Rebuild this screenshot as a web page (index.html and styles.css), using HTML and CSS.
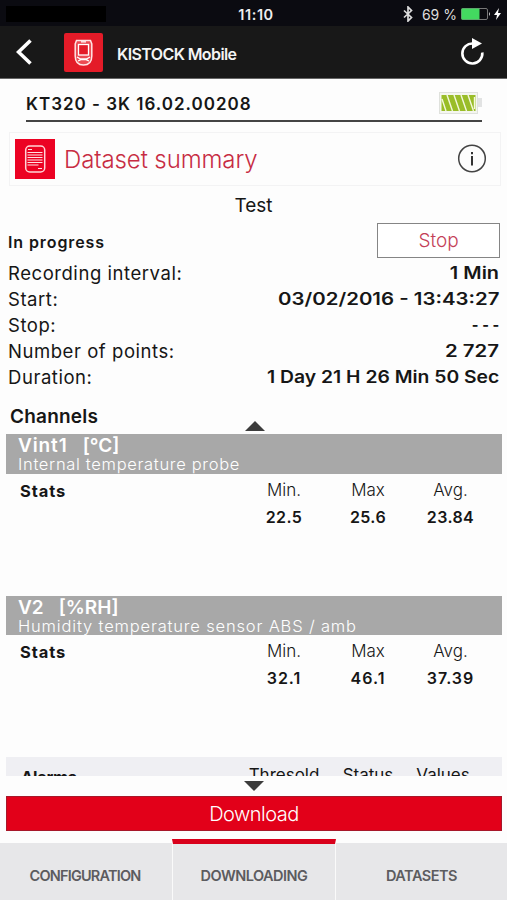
FILE: index.html
```html
<!DOCTYPE html>
<html lang="en">
<head>
	<meta charset="utf-8">
	<meta name="viewport" content="width=device-width">
	<title>KISTOCK Mobile</title>
	<link rel="stylesheet" href="styles.css">
</head>
<body>
	<div class="status">
		<div class="carrier"></div>
		<div class="time">11:10</div>
		<div class="power">
			<svg class="bt" width="10" height="16" viewBox="0 0 10 16"><path d="M1 4.500l7.500 7L5 15V1l3.500 3.500L1 11.500" fill="none" stroke="#ddd" stroke-width="1.700"/></svg>
			<span class="percent">69 %</span>
			<svg width="42" height="14" viewBox="0 0 42 14">
				<rect x="1.500" y="1.500" width="26" height="11" rx="1.500" fill="#0b0b10" stroke="#777"/>
				<rect x="1.500" y="1.500" width="18" height="11" fill="#43d960"/>
				<path d="M29 5q2 2 0 4z" fill="#ccc"/>
				<path d="M39 1l-5 7h3l-1 5 5-7h-3z" fill="#fff"/>
			</svg>
		</div>
	</div>

	<div class="header">
		<svg class="back" width="16" height="26" viewBox="0 0 16 26"><path d="M14.500 1.500L2.500 13l12 11.500" fill="none" stroke="#fff" stroke-width="3.600"/></svg>
		<svg class="logo" width="39" height="39" viewBox="0 0 39 39">
			<rect width="39" height="39" rx="2" fill="#e41b28"/>
			<path d="M12.500 7.500h14l1.300 3.500v12q0 9-8.300 9t-8.300-9V11z" fill="#ec4b53" stroke="#ffe5e5" stroke-width="1.500"/>
			<rect x="14.500" y="11.500" width="10" height="10.500" fill="#e41b28" stroke="#fff" stroke-width="1.300"/>
			<path d="M17 8.800h5M13 24l3.500 2h6l3.500-2M14 28l3.500-1.500h4L25 28" fill="none" stroke="#fff" stroke-width="1.300"/>
		</svg>
		<h1>KISTOCK Mobile</h1>
		<svg class="refresh" width="26" height="30" viewBox="0 0 26 30">
			<path d="M14 6.500A10 10 0 1 0 23.300 15.500" fill="none" stroke="#fff" stroke-width="2.600"/>
			<path d="M13 1l10 5.500-10 5.500z" fill="#fff"/>
		</svg>
	</div>

	<div class="device">
		<span>KT320 - 3K 16.02.00208</span>
		<svg width="44" height="22" viewBox="0 0 44 22">
			<rect x="1.500" y="0.500" width="38" height="21" fill="#f4f6ef" stroke="#dfe1dc"/>
			<rect x="40" y="6" width="4" height="9" fill="#e2e3e3"/>
			<rect x="3.500" y="3" width="34" height="16" fill="#9abd28"/>
			<path d="M4 7l4 12M9 3l5.500 16M16 3l5.500 16M23 3l5.500 16M30 3l5.500 16M36.500 5v12" stroke="#f3f8dc" stroke-width="1.400"/>
		</svg>
	</div>

	<div class="summary">
		<svg width="40" height="40" viewBox="0 0 40 40">
			<rect width="40" height="40" fill="#ec0223"/>
			<rect x="10.700" y="7" width="19" height="26" rx="4" fill="none" stroke="#ffd5d8" stroke-width="1.500"/>
			<path d="M13 10.500h4M12.500 13.500h15M12.500 16h15M12.500 18.500h15M12.500 21h15M12.500 23.500h15M12.500 26h11M23 29.500h4" stroke="#ffe1e3" stroke-width="1.200"/>
		</svg>
		<h2>Dataset summary</h2>
		<svg width="30" height="30" viewBox="0 0 30 30">
			<circle cx="15" cy="14.500" r="13.300" fill="none" stroke="#444" stroke-width="1.500"/>
			<path d="M15 8v2.300M15 12v9.500" stroke="#333" stroke-width="2"/>
		</svg>
	</div>

	<div class="dataset">Test</div>

	<div class="state">
		<span>In progress</span>
		<button type="button" class="stop">Stop</button>
	</div>
	<div class="row"><span>Recording interval:</span><b>1 Min</b></div>
	<div class="row"><span>Start:</span><b class="date">03/02/2016 - 13:43:27</b></div>
	<div class="row"><span>Stop:</span><b class="none">- - -</b></div>
	<div class="row"><span>Number of points:</span><b class="date">2 727</b></div>
	<div class="row"><span>Duration:</span><b class="duration">1 Day 21 H 26 Min 50 Sec</b></div>

	<div class="channels">
		<h3>Channels</h3>
		<svg width="20" height="10" viewBox="0 0 20 10"><path d="M10 0l10 10H0z" fill="#3c3c3c"/></svg>
	</div>

	<div class="list">
		<div class="channel">
			<div class="bar">
				<div class="name"><span class="vint">Vint1</span><span class="unit">[°C]</span></div>
				<div class="probe">Internal temperature probe</div>
			</div>
			<div class="stats">
				<b>Stats</b><span>Min.</span><span>Max</span><span>Avg.</span>
				<i></i><em>22.5</em><em>25.6</em><em>23.84</em>
			</div>
		</div>
		<div class="channel">
			<div class="bar">
				<div class="name"><span>V2</span><span class="unit">[%RH]</span></div>
				<div class="probe humidity">Humidity temperature sensor ABS / amb</div>
			</div>
			<div class="stats humidity">
				<b>Stats</b><span>Min.</span><span>Max</span><span>Avg.</span>
				<i></i><em>32.1</em><em>46.1</em><em>37.39</em>
			</div>
		</div>
		<div class="alarms">
			<b>Alarms</b><span>Thresold</span><span>Status</span><span>Values</span>
		</div>
	</div>

	<div class="more"><svg width="20" height="10" viewBox="0 0 20 10"><path d="M0 0h20L10 10z" fill="#3c3c3c"/></svg></div>
	<button type="button" class="download">Download</button>

	<div class="tabs">
		<div class="tab config">CONFIGURATION</div>
		<div class="tab active">DOWNLOADING</div>
		<div class="tab">DATASETS</div>
	</div>
</body>
</html>
```
FILE: styles.css
```css
body,h1,h2,h3,button{margin:0;padding:0;}
*{box-sizing:border-box;}
body{
	width: 507px;height: 900px;overflow: hidden;
	display: flex;flex-direction: column;
	background: #fdfdfd;color: #161616;
	font-family: Inter,"Liberation Sans",sans-serif;
	white-space: nowrap;
}
body > *{flex-shrink: 0;}
svg{display: block;flex-shrink: 0;}
button{font-family: inherit;border: none;}

.status{height: 26px;background: #0b0b11;color: #eee;display: grid;grid-template-columns: 1fr auto 1fr;align-items: center;padding: 2px 5px 0 6px;}
.carrier{width: 100px;height: 16px;background: #000;}
.time{font-size: 14.5px;font-weight: 600;padding-left: 4px;letter-spacing: 0.6px;}
.power{display: flex;align-items: center;justify-content: flex-end;}
.percent{font-size: 14px;margin: 0 3px 0 9px;color: #ddd;}

.header{height: 53px;background: #181818;border-bottom: 1px solid #666;display: flex;align-items: center;padding: 0 22px 0 16px;}
.logo{margin-left: 32px;}
.header h1{font-size: 16px;font-weight: 600;color: #f4f4f4;margin: 3px auto 0 14px;letter-spacing: -0.6px;}

.device{height: 43px;margin: 0 25px 0 26px;border-bottom: 2px solid #444;display: flex;align-items: center;justify-content: space-between;padding: 7px 0 0;font-size: 17px;font-weight: 600;letter-spacing: 1px;}
.device span{padding-top: 1px;}

.summary{height: 54px;margin: 10px 6px 0 9px;border: 1px solid #f3f3f4;display: flex;align-items: center;padding: 0 13px 0 5px;}
.summary h2{font-size: 24px;font-weight: 300;color: #c72c43;margin: 0 auto 0 9px;letter-spacing: -0.1px;}

.dataset{height: 37px;line-height: 39px;text-align: center;font-size: 19px;}

.state{height: 35px;display: flex;justify-content: space-between;align-items: center;padding: 0 7px 0 8px;font-size: 16px;font-weight: 600;letter-spacing: 0.9px;}
.state span{padding-top: 2px;}
.stop{width: 123px;height: 35px;border: 1px solid #858585;background: #fff;color: #c43f58;font-size: 19px;font-weight: 300;letter-spacing: 0;}

.row{height: 26px;line-height: 30px;display: flex;justify-content: space-between;padding: 0 8px;font-size: 18.5px;letter-spacing: 0.55px;}
/* figures are set wider than the labels */
.row b{font-size: 17px;font-weight: 600;letter-spacing: 0;line-height: 31px;transform: scaleX(1.17);transform-origin: right;}
.row .date{transform: scaleX(1.2);}
.row .none{transform: scaleX(0.85);}
.row .duration{transform: scaleX(1.137);}

.channels{height: 42px;margin-top: 4px;display: grid;grid-template-columns: 1fr 20px 1fr;padding: 0 8px 0 10px;}
.channels h3{font-size: 19px;font-weight: 600;line-height: 49px;letter-spacing: 0.2px;}
.channels svg{margin-top: 29px;}

.list{height: 342px;margin: 0 5px 0 6px;overflow: hidden;}
.channel{height: 161.500px;}
.bar{height: 39.500px;background: #a8a8a8;color: #fff;padding-left: 12px;}
.name{font-size: 19px;font-weight: 600;line-height: 23px;display: flex;}
.vint{letter-spacing: 0.9px;}
.unit{margin-left: 15px;}
.probe{font-size: 16.5px;font-weight: 300;line-height: 15px;letter-spacing: 0.68px;}
.probe.humidity{letter-spacing: 0.83px;}
.stats{display: grid;grid-template-columns: 236px 84px 84px 81px;grid-template-rows: 33px 22px;line-height: 33px;text-align: center;}
.stats b{font-size: 16.5px;font-weight: 700;text-align: left;padding-left: 14px;letter-spacing: 0.9px;line-height: 34px;}
.stats span{font-size: 17px;font-weight: 300;}
.stats em{font-size: 16px;font-weight: 600;font-style: normal;line-height: 21px;letter-spacing: 0.4px;}
.stats.humidity em{letter-spacing: 1px;}

.alarms{height: 30px;background: #efeff3;display: grid;grid-template-columns: 236px 84px 84px 66px;line-height: 37px;text-align: center;font-size: 17px;font-weight: 400;}
.alarms b{font-size: 16.5px;text-align: left;padding-left: 15px;letter-spacing: -0.3px;line-height: 40px;}

.more{height: 20px;display: flex;justify-content: center;align-items: center;}
.download{height: 35px;margin: 0 5px 0 6px;background: #e20019;border: 1px solid #a7182a;color: #fff;font-size: 20px;font-weight: 300;letter-spacing: -0.5px;}

.tabs{margin-top: 8px;height: 61px;display: grid;grid-template-columns: 172px 164px 171px;align-items: end;}
.tab{height: 57px;background: #e7e7e9;color: #5c5c5f;font-size: 14.5px;font-weight: 600;line-height: 66px;text-align: center;letter-spacing: -0.5px;}
.config{letter-spacing: -0.8px;padding-right: 2px;}
.active{height: 61px;line-height: 64px;border-top: 5px solid #d9001b;border-left: 1px solid #fafafa;border-right: 1px solid #fafafa;}
```
